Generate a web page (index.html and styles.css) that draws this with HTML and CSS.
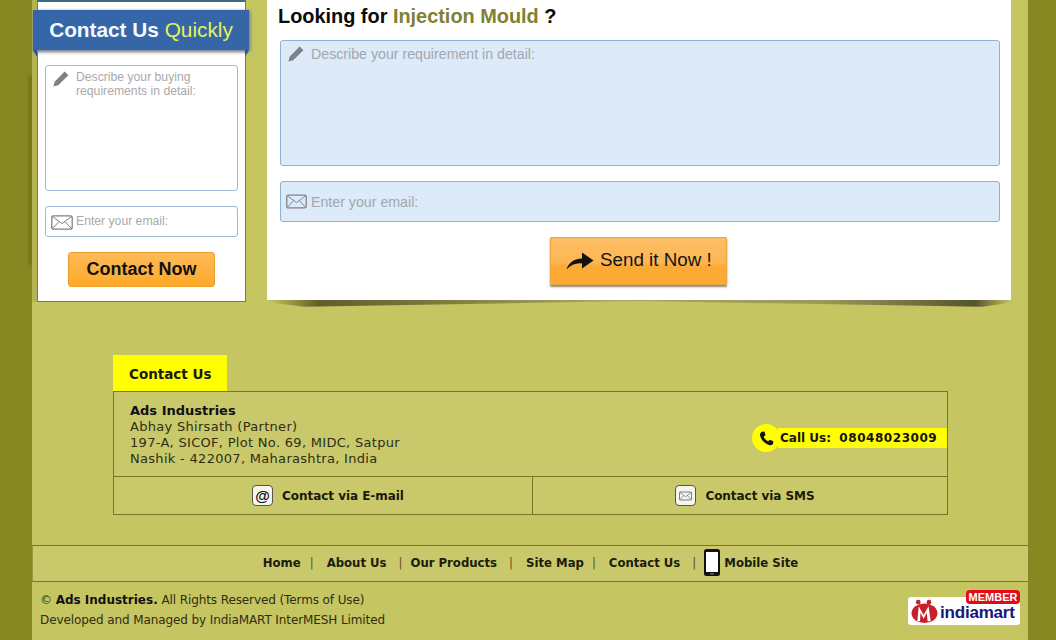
FILE: index.html
```html
<!DOCTYPE html>
<html lang="en">
<head>
<meta charset="utf-8">
<title>Ads Industries</title>
<link rel="stylesheet" href="styles.css">
</head>
<body>
<svg class="defs" width="0" height="0" aria-hidden="true">
  <symbol id="pencil" viewBox="0 0 16 16"><path d="M11.6 0.6 15.4 4.2 5.2 14.2 0.4 15.6 1.6 10.8ZM2.6 11.2 4.8 13.4" fill="currentColor"/></symbol>
  <symbol id="mail" viewBox="0 0 22 15"><rect x="0.8" y="0.8" width="20.4" height="13.4" rx="1.6" fill="none" stroke="currentColor" stroke-width="1.3"/><path d="M1.2 1.4 11 8.6 20.8 1.4M1.2 13.8 8 6.6M20.8 13.8 14 6.6" fill="none" stroke="currentColor" stroke-width="1"/></symbol>
</svg>
<div class="page">
  <div class="forms">
    <aside class="quick">
      <h2 class="ribbon">Contact Us <span>Quickly</span></h2>
      <div class="field quick-area">
        <svg class="ico-pencil"><use href="#pencil"/></svg>
        <span>Describe your buying<br>requirements in detail:</span>
      </div>
      <div class="field quick-mail">
        <svg class="ico-mail"><use href="#mail"/></svg>
        <span>Enter your email:</span>
      </div>
      <button class="quick-btn" type="button">Contact Now</button>
    </aside>
    <section class="main-col">
      <div class="main">
        <h1 class="title">Looking for <span>Injection Mould</span> ?</h1>
        <div class="field main-area">
          <svg class="ico-pencil"><use href="#pencil"/></svg>
          <span>Describe your requirement in detail:</span>
        </div>
        <div class="field main-mail">
          <svg class="ico-mail"><use href="#mail"/></svg>
          <span>Enter your email:</span>
        </div>
        <button class="send-btn" type="button">
          <svg class="send-arrow" viewBox="0 0 28 18"><path d="M0.500 17.500C3 10 9 6.500 16 6.500L16 0.500 27.500 8.500 16 16.500 16 11.500C10 10.800 5 13 0.500 17.500Z" fill="#111"/></svg>
          Send it Now !
        </button>
      </div>
      <div class="main-shadow"></div>
    </section>
  </div>

  <section class="contact">
    <div class="tab">Contact Us</div>
    <div class="box">
      <div class="box-top">
        <address class="addr">
          <b>Ads Industries</b><br>
          Abhay Shirsath (Partner)<br>
          197-A, SICOF, Plot No. 69, MIDC, Satpur<br>
          Nashik - 422007, Maharashtra, India
        </address>
        <div class="call">
          <span class="call-disc">
            <svg viewBox="0 0 16 16" width="15" height="15"><path d="M3.200 0.800 5.800 0.500 7 4.500 5 5.800C5.500 7.800 7.500 10 9.800 11L11.500 9.200 15.300 11 15 13.600C14.500 15 12.500 15.600 10.500 14.800 6 13.200 2.400 9.500 1.200 5 0.700 3 1.500 1.500 3.200 0.800Z" fill="#111"/></svg>
          </span>
          <span class="call-text">Call Us:&nbsp; <span class="call-num">08048023009</span></span>
        </div>
      </div>
      <div class="box-links">
        <a class="via via-mail"><span class="key">@</span>Contact via E-mail</a>
        <a class="via via-sms"><span class="key"><svg class="key-mail"><use href="#mail"/></svg></span>Contact via SMS</a>
      </div>
    </div>
  </section>

  <nav class="nav">
    <a>Home</a><i class="s1">|</i>
    <a>About Us</a><i class="s2">|</i>
    <a>Our Products</a><i class="s3">|</i>
    <a>Site Map</a><i class="s4">|</i>
    <a>Contact Us</a><i class="s5">|</i>
    <svg class="phone" viewBox="0 0 16 27"><rect x="0" y="0" width="16" height="27" rx="2.500" fill="#111"/><rect x="2" y="3" width="12" height="20" fill="#fff"/><rect x="6" y="24.300" width="4" height="1" fill="#888"/></svg>
    <a>Mobile Site</a>
  </nav>

  <footer class="foot">
    <div class="copy">
      <div>© <b>Ads Industries.</b> All Rights Reserved (Terms of Use)</div>
      <div>Developed and Managed by IndiaMART InterMESH Limited</div>
    </div>
    <div class="logo">
      <span class="member">MEMBER</span>
      <svg class="logo-m" viewBox="0 0 30 28">
        <ellipse cx="15" cy="16" rx="14.500" ry="11" fill="#c8202a"/>
        <circle cx="8" cy="3.500" r="2.600" fill="#c8202a"/>
        <circle cx="20" cy="3.500" r="2.600" fill="#c8202a"/>
        <path d="M7 25 8.500 8 14 18 19.500 8 22 25 18.500 25 17.500 15.500 14 22 10.500 15.500 10 25Z" fill="#fff"/>
      </svg>
      <span class="logo-text">indiamart</span>
    </div>
  </footer>
</div>
</body>
</html>
```
FILE: styles.css
```css
* { box-sizing: border-box; }
html, body { margin: 0; height: 640px; overflow: hidden; }
body { background: #888823; font-family: "DejaVu Sans", sans-serif; color: #1c1c0c; }
.defs { display: block; height: 0; }
.page { position: relative; width: 996px; height: 640px; margin: 0 0 0 32px; background: #c5c562; }
.page::before { content: ""; position: absolute; left: -3px; top: 75px; width: 3px; height: 190px; background: #6f6f14; filter: blur(1.500px); }

.forms { display: flex; align-items: flex-start; height: 355px; padding-left: 5px; font-family: "Liberation Sans", Arial, sans-serif; }

.quick { position: relative; width: 209px; height: 302px; padding: 10px 7px 0; background: #fff; border: 1px solid #5d7d8c; border-top: 2px solid #3f6b80; box-shadow: -5px 0 0 #b4b452; }
.ribbon { position: relative; width: 216px; height: 40px; margin: -2px 0 0 -12px; font-size: 20.800px; line-height: 40px; font-weight: 700; color: #f3f9ff; text-align: center; background: #3566a8; box-shadow: 0 2px 3px #8a8aa0, 1px 1px 3px #777; white-space: nowrap; }
.ribbon span { font-weight: 400; color: #e4f25c; }
.ribbon::before, .ribbon::after { content: ""; position: absolute; top: 40px; width: 4px; height: 7px; background: #2c5590; }
.ribbon::before { left: 0; clip-path: polygon(0 0, 100% 0, 100% 100%); }
.ribbon::after { right: 0; clip-path: polygon(0 0, 100% 0, 0 100%); }

.field { display: flex; background: #fff; border: 1px solid #9cbcd8; border-radius: 3px; color: #a9a9a9; }
.ico-pencil { display: block; flex: none; color: #808080; }
.ico-mail { display: block; flex: none; color: #808080; }

.quick-area { width: 193px; height: 126px; margin-top: 15px; padding: 4px 0 0 7px; font-size: 12.200px; line-height: 14px; }
.quick-area .ico-pencil { width: 16px; height: 16px; margin: 1px 7px 0 0; }
.quick-mail { width: 193px; height: 31px; margin-top: 15px; padding: 7px 0 0 5px; font-size: 12.200px; line-height: 14px; align-items: flex-start; }
.quick-mail .ico-mail { width: 22px; height: 15px; margin: 1px 3px 0 0; }
.quick-btn { display: block; width: 147px; height: 35px; margin: 15px 0 0 23px; padding: 0; font: 700 18px/33px "Liberation Sans", Arial, sans-serif; color: #111; background: linear-gradient(#fdbb59, #fda928); border: 1px solid #ea9d2c; border-radius: 3px; }

.main-col { width: 745px; margin-left: 21px; }
.main { height: 300px; padding: 0 12px 0 13px; background: #fff; border-right: 1px solid #b9bda0; }
.title { margin: 0 0 0 -2px; padding-top: 3px; height: 40px; font-size: 19.900px; line-height: 27px; font-weight: 700; color: #0a0a0a; }
.title span { color: #808034; }
.main .field { width: 720px; background: #dceafa; border-color: #8fb3d2; color: #a3a7ad; font-size: 14.200px; line-height: 16px; }
.main-area { height: 126px; padding: 5px 0 0 7px; }
.main-area .ico-pencil { width: 16px; height: 16px; margin: 0 7px 0 0; color: #7c8289; }
.main .main-mail { height: 41px; margin-top: 15px; padding: 12px 0 0 5px; align-items: flex-start; }
.main-mail .ico-mail { width: 21px; height: 15px; margin: 0 4px 0 0; color: #7c8289; }
.send-btn { display: flex; align-items: center; width: 177px; height: 48px; margin: 15px 0 0 270px; padding: 0 0 3px 15px; font: 400 18.800px/24px "Liberation Sans", Arial, sans-serif; color: #141414; background: linear-gradient(#fdbe66 0, #fdb552 55%, #fbab35 60%, #fbab35 100%); border: 1px solid #eba545; border-radius: 1px; box-shadow: 0 2px 2px #8c8c6c; }
.send-arrow { width: 28px; height: 18px; margin: 3px 6px 0 0; }
.main-shadow { height: 9px; clip-path: polygon(0 0, 100% 0, 99% 40%, 96% 75%, 50% 12%, 5% 75%, 1.500% 40%); background: linear-gradient(90deg, #c5c562 0, #5f5f2a 7%, #74743a 20%, #a8a860 45%, #98985a 75%, #55552c 95%, #c5c562 100%); filter: blur(0.600px); }

.contact { margin-left: 81px; width: 835px; }
.tab { width: 114px; height: 36px; padding-left: 16px; font-size: 13.500px; line-height: 38px; font-weight: 700; color: #1a1a08; background: #ffff00; }
.box { height: 124px; background: #c9c96b; border: 1px solid #777726; }
.box-top { display: flex; justify-content: space-between; align-items: center; height: 85px; border-bottom: 1px solid #777726; }
.addr { padding: 11px 0 0 16px; align-self: flex-start; font-style: normal; font-size: 13px; line-height: 16px; letter-spacing: 0.300px; color: #2e2e12; }
.addr b { color: #111; letter-spacing: 0; }
.call { display: flex; align-items: center; height: 28px; margin: 8px 0 0 0; }
.call-disc { position: relative; display: flex; align-items: center; justify-content: center; width: 28px; height: 28px; margin-right: -2px; background: #ffff00; border-radius: 50%; }
.call-text { width: 169px; height: 20px; padding-left: 2px; font-size: 12px; line-height: 20px; font-weight: 700; color: #151508; background: #ffff00; white-space: nowrap; }
.call-num { letter-spacing: 0.550px; }
.box-links { display: grid; grid-template-columns: 419px 1fr; height: 37px; }
.via { display: flex; align-items: center; justify-content: center; padding-left: 10px; font-size: 12px; letter-spacing: -0.050px; font-weight: 700; color: #1a1a0a; }
.via-mail { border-right: 1px solid #777726; }
.key { display: flex; align-items: center; justify-content: center; width: 21px; height: 21px; margin-right: 9px; font: 700 15px/1 "Liberation Sans", Arial, sans-serif; color: #111; background: #f6f6f0; border: 1px solid #55554a; border-radius: 4px; }
.key-mail { display: block; width: 13px; height: 10px; color: #555; }

.nav { display: flex; align-items: center; justify-content: center; height: 37px; margin-top: 30px; padding-bottom: 2px; font-size: 11.700px; font-weight: 700; color: #1c1c0c; background: #c9c96b; border-top: 1px solid #777726; border-bottom: 1px solid #777726; border-left: 1px solid #9a9a40; }
.nav i { font-style: normal; font-weight: 400; color: #55551f; }
.s1 { margin: 0 13px 0 9px; }
.s2 { margin: 0 8px 0 12px; }
.s3 { margin: 0 13px 0 12px; }
.s4 { margin: 0 13px 0 8px; }
.s5 { margin: 0 8px 0 12px; }
.phone { display: block; width: 16px; height: 27px; margin-right: 4px; }

.foot { display: flex; justify-content: space-between; height: 58px; padding: 0 8px; font-size: 12px; letter-spacing: -0.100px; color: #2e2e12; }
.copy { padding-top: 8px; line-height: 20px; }
.copy b { color: #111; letter-spacing: 0; }
.logo { position: relative; display: flex; align-items: center; width: 112px; height: 28px; margin-top: 15px; background: #fff; border-radius: 3px; }
.member { position: absolute; top: -7px; right: 0; width: 54px; height: 14px; font: 700 11px/14px "Liberation Sans", Arial, sans-serif; letter-spacing: 0; text-align: center; color: #fff; background: #df0d17; border-radius: 4px; }
.logo-m { display: block; width: 27px; height: 25px; margin-left: 3px; }
.logo-text { margin: 3px 0 0 2px; font: 700 17px/20px "Liberation Sans", Arial, sans-serif; color: #12197c; letter-spacing: -0.200px; }
```
